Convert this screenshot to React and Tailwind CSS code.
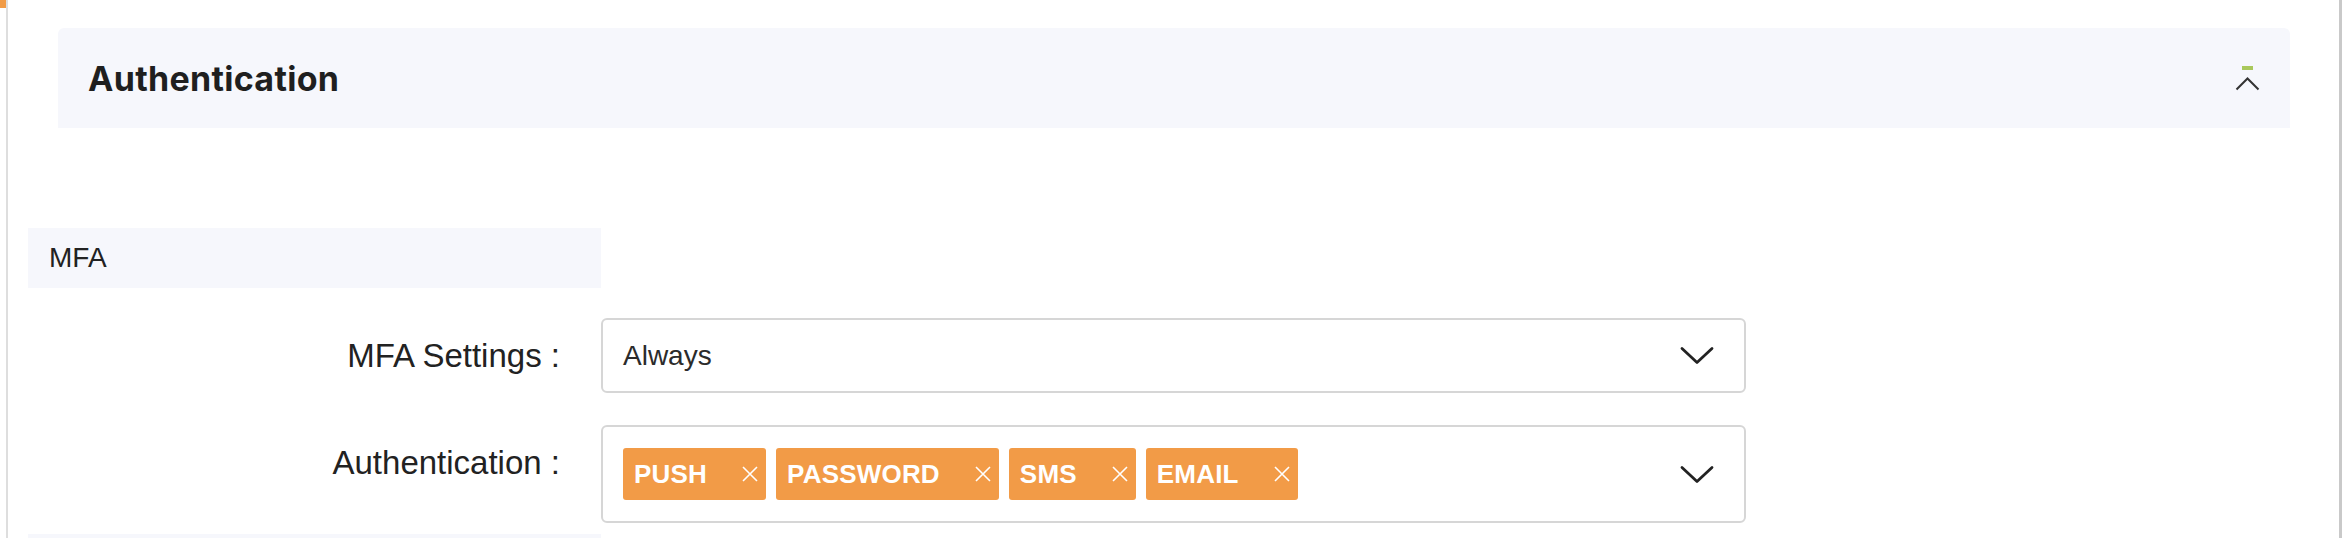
const tags = ['PUSH', 'PASSWORD', 'SMS', 'EMAIL']

function ChevronDown() {
  return (
    <svg width="34" height="19" viewBox="0 0 34 19" fill="none" className="shrink-0">
      <path d="M2 2.5 L17 16.5 L32 2.5" stroke="#222" strokeWidth="2.8" strokeLinecap="round" strokeLinejoin="round" />
    </svg>
  )
}

function Tag({ label }) {
  return (
    <span className="flex h-[52px] items-center rounded-[3px] bg-[#f29b47] pl-[11px] pr-[8px] text-[26px] font-bold leading-none tracking-[0.2px] text-white">
      {label}
      <svg width="16" height="16" viewBox="0 0 16 16" className="ml-[35px]">
        <path d="M1 1 L15 15 M15 1 L1 15" stroke="#fff" strokeWidth="1.6" />
      </svg>
    </span>
  )
}

export default function App() {
  return (
    <div className="flex h-[538px] w-full overflow-hidden bg-white font-['Liberation_Sans',Arial,sans-serif] text-[#222]">
      <div className="w-[6px] shrink-0">
        <div className="h-[8px] bg-[#f19b46]" />
      </div>
      <div className="w-[2px] shrink-0 bg-[#dedede]" />

      <div className="flex min-w-0 flex-1 flex-col">
        <section className="ml-[50px] mr-[49px] mt-[28px] flex h-[100px] shrink-0 items-center justify-between rounded-t-[6px] bg-[#f6f7fc] pl-[30px] pr-[30px]">
          <h2 className="font-['Inter',sans-serif] text-[34px] font-bold tracking-[0.3px] text-[#1f1f1f]">
            Authentication
          </h2>
          <div className="flex flex-col items-center">
            <div className="mb-[6px] h-[4px] w-[11px] bg-[#a9c85c]" />
            <svg width="25" height="15" viewBox="0 0 25 15" fill="none">
              <path d="M1.5 13.5 L12.5 2.5 L23.5 13.5" stroke="#333" strokeWidth="2" />
            </svg>
          </div>
        </section>

        <div className="ml-[20px] mt-[100px] flex h-[60px] w-[573px] shrink-0 items-center bg-[#f6f7fc] pl-[21px] text-[28px]">
          MFA
        </div>

        <div className="ml-[20px] mt-[30px] grid shrink-0 grid-cols-[573px_1145px] gap-y-[32px]">
          <label className="pr-[41px] text-right text-[33px] leading-[75px]">MFA Settings :</label>
          <div className="flex h-[75px] items-center justify-between rounded-[6px] border-2 border-[#d6d6d6] pl-[20px] pr-[30px] text-[28px] text-[#2b2b2b]">
            <span>Always</span>
            <ChevronDown />
          </div>

          <label className="pr-[41px] text-right text-[33px] leading-[75px]">Authentication :</label>
          <div className="flex h-[98px] items-center justify-between rounded-[6px] border-2 border-[#d6d6d6] pl-[20px] pr-[30px]">
            <div className="flex gap-[10px]">
              {tags.map((t) => (
                <Tag key={t} label={t} />
              ))}
            </div>
            <ChevronDown />
          </div>
        </div>

        <div className="ml-[20px] mt-[11px] h-[60px] w-[573px] shrink-0 bg-[#f6f7fc]" />
      </div>

      <div className="w-[3px] shrink-0 bg-[#c9c9c9]" />
    </div>
  )
}
